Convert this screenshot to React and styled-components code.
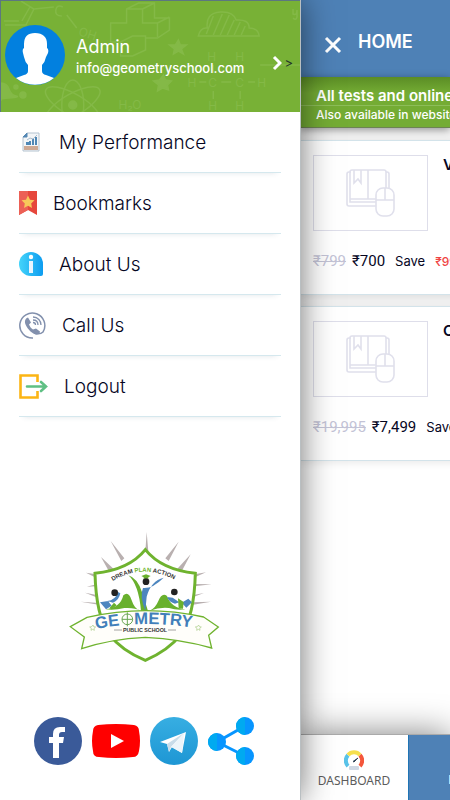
import React from "react";
import styled, { createGlobalStyle, css } from "styled-components";

const GlobalStyle = createGlobalStyle`
  * {
    box-sizing: border-box;
  }
  body {
    margin: 0;
    background: #fff;
    color: #06061f;
    font-family: "Inter", "Open Sans", sans-serif;
  }
  button {
    font-family: inherit;
  }
`;

const Screen = styled.div`
  display: flex;
  min-height: 100vh;
  overflow: hidden;
`;

const Drawer = styled.aside`
  display: flex;
  flex-direction: column;
  flex: 0 0 300px;
  position: relative;
  z-index: 1;
  background: #fff;
  box-shadow: 1px 0 0 #b9bfc2, 0 0 32px rgba(0, 0, 0, 0.58);
`;

const ProfileButton = styled.button`
  display: flex;
  align-items: center;
  position: relative;
  gap: 11px;
  width: 100%;
  height: 112px;
  padding: 0 7px 4px 4px;
  border: solid #5c7780;
  border-width: 1px 0 0 1px;
  background: #78b136;
  color: #fff;
  text-align: left;
  cursor: pointer;
`;

const Doodles = styled.svg`
  position: absolute;
  top: 0;
  left: 0;
  width: 100%;
  height: 100%;
  fill: none;
  stroke: #84b947;
  stroke-width: 1.5;
  text {
    fill: #84b947;
    stroke: none;
    font: 12px "Inter", sans-serif;
  }
`;

const Avatar = styled.svg`
  position: relative;
  flex: none;
  width: 60px;
  height: 60px;
`;

const ProfileText = styled.span`
  display: flex;
  flex-direction: column;
  position: relative;
  flex: 1;
  padding-top: 4px;
`;

const ProfileName = styled.span`
  font-size: 18px;
  line-height: 22px;
`;

const ProfileMail = styled.span`
  font-size: 13px;
  font-weight: 500;
  line-height: 20px;
`;

const ProfileArrow = styled.span`
  display: flex;
  align-items: center;
  position: relative;
  gap: 2px;
  padding-top: 16px;
  color: #23332a;
  font-size: 13px;
`;

const Menu = styled.ul`
  margin: 0;
  padding: 0 19px;
  list-style: none;
`;

const MenuItem = styled.li`
  border-bottom: 1px solid #d5e8ee;
  box-shadow: 0 5px 5px -5px rgba(60, 90, 110, 0.16);
`;

const MenuLink = styled.a`
  display: flex;
  align-items: center;
  gap: 16px;
  height: 60px;
  color: #06061f;
  font-size: 19px;
  font-weight: 300;
  text-decoration: none;
  svg {
    flex: none;
  }
`;

const Brand = styled.div`
  display: flex;
  justify-content: center;
  margin-top: auto;
  padding: 24px 10px 47px 0;
`;

const Social = styled.nav`
  display: flex;
  justify-content: center;
  gap: 10px;
  padding: 0 10px 35px 0;
  a {
    display: block;
    height: 48px;
  }
`;

const Page = styled.main`
  display: flex;
  flex-direction: column;
  flex: 1;
  min-width: 0;
  overflow: hidden;
  background: #fff;
  white-space: nowrap;
`;

const TopBar = styled.header`
  display: flex;
  align-items: center;
  gap: 16px;
  height: 77px;
  padding: 6px 0 0 24px;
  background: #4e81b6;
  color: #fff;
`;

const CloseButton = styled.button`
  display: flex;
  margin-top: 6px;
  padding: 0;
  border: 0;
  background: none;
  cursor: pointer;
`;

const Title = styled.h1`
  margin: 0;
  font-size: 18px;
  font-weight: 600;
  line-height: 24px;
`;

const Notice = styled.section`
  position: relative;
  border-bottom: 1px solid #6d8353;
  background: linear-gradient(#5b8d25, #74ac34 16px, #74ac34);
  box-shadow: 0 2px 8px rgba(0, 0, 0, 0.4);
  color: #fff;
`;

const NoticeTitle = styled.div`
  padding: 10px 0 0 16px;
  border-bottom: 1px solid #8dbd59;
  font-size: 15px;
  font-weight: 600;
  line-height: 18px;
`;

const NoticeText = styled.div`
  padding: 0 0 3px 16px;
  font-size: 12px;
  font-weight: 500;
  line-height: 18px;
`;

const CourseList = styled.div`
  display: grid;
  gap: 11px;
  padding-top: 12px;
  background: #f3f3f3;
`;

const Course = styled.article`
  height: 155px;
  padding: 14px 0 0 13px;
  border: solid #d3e3ea;
  border-width: 1px 0;
  background: #fff;
  box-shadow: 0 2px 8px rgba(0, 0, 0, 0.09);
`;

const CourseTop = styled.div`
  display: flex;
  gap: 15px;
`;

const Cover = styled.div`
  display: flex;
  align-items: center;
  justify-content: center;
  flex: none;
  width: 115px;
  height: 76px;
  border: 1px solid #dedeea;
`;

const CourseName = styled.h2`
  margin: 0;
  font-size: 15px;
  font-weight: 600;
  line-height: 20px;
`;

const Prices = styled.div`
  display: flex;
  align-items: center;
  gap: 6px;
  height: 28px;
  margin-top: 16px;
`;

const Price = styled.span`
  font-family: "Roboto", sans-serif;
  font-size: 15px;
  line-height: 28px;
  ${({ $old }) =>
    $old &&
    css`
      color: #c3c3d6;
      text-decoration: line-through;
    `}
`;

const Save = styled.span`
  margin: 0 4px;
  font-size: 13px;
`;

const Saving = styled.span`
  color: #f04444;
  font-size: 12px;
  font-weight: 500;
`;

const BottomNav = styled.nav`
  display: flex;
  height: 66px;
  margin-top: auto;
  border-top: 1px solid #aaa;
  box-shadow: 0 0 34px rgba(0, 0, 0, 0.5);
`;

const Tab = styled.a`
  display: flex;
  flex: 0 0 108px;
  flex-direction: column;
  align-items: center;
  gap: 3px;
  padding-top: 15px;
  background: #fff;
  color: #5c5c5c;
  font-family: "Noto Sans", sans-serif;
  font-size: 12px;
  line-height: 16px;
  text-decoration: none;
  ${({ $active }) =>
    $active &&
    css`
      flex-basis: 116px;
      padding-top: 37px;
      border-left: 1px solid #1f74b5;
      background: #4e81b6;
      color: #fff;
      font-weight: 700;
    `}
`;

const PerformanceIcon = () => (
  <svg width="24" height="24" viewBox="0 0 24 24" aria-hidden="true">
    <path d="M8 3h12v18H4V7z" fill="#f3f5f7" stroke="#b4c3d0" />
    <path d="M8 3v4H4z" fill="#5588b4" stroke="#5588b4" />
    <path d="M7 15h3v-3H7zm3 0h2v-4h-2zm3 0h2V9h-2zm3 0h2V7h-2z" fill="#4f87b5" />
    <path d="M8 10l3-2 3 1 4-4" stroke="#a8bccd" fill="none" />
    <path d="M5 16h14v4H5z" fill="#cda994" />
  </svg>
);

const BookmarkIcon = () => (
  <svg width="18" height="24" viewBox="0 0 18 24" aria-hidden="true">
    <path d="M0 0h18v24l-9-5-9 5z" fill="#e6473c" />
    <path d="M0 0h9v19l-9 5z" fill="#ec6056" />
    <path d="M9 4.500l2 4.200 4.500.6-3.300 3.200.8 4.500-4-2.200-4 2.200.8-4.500-3.300-3.200 4.500-.6z" fill="#f7c85a" />
  </svg>
);

const InfoIcon = () => (
  <svg width="24" height="24" viewBox="0 0 24 24" aria-hidden="true">
    <defs>
      <linearGradient id="info" x1="0" x2="1">
        <stop offset="0" stopColor="#44d4fa" />
        <stop offset="1" stopColor="#0d9cf0" />
      </linearGradient>
    </defs>
    <path d="M12 0a12 12 0 0 1 12 12v10q0 2-2 2H12a12 12 0 0 1 0-24z" fill="url(#info)" />
    <circle cx="12" cy="5" r="2.200" fill="#fff" />
    <path d="M10 9h4v12h-4z" fill="#e9f5ff" />
  </svg>
);

const CallIcon = () => (
  <svg width="27" height="27" viewBox="0 0 27 27" fill="none" stroke="#8290ad" aria-hidden="true">
    <path d="M14 26A12.500 12.500 0 1 1 24 20q-3 3-9 1" strokeWidth="1.500" />
    <path
      d="M9 5.500c-3 1-4 4-2 8 2 4 6 8 10 9 2 .4 4-1 4-3l-4-3-3 1c-2-1-3-3-4-5l2-2z"
      fill="#8290ad"
      stroke="none"
    />
    <path d="M14 5c5 0 8 4 8 8M14 8c3 0 5 2 5 5M14 10.500c1.500 0 2.500 1 2.500 2.500" strokeWidth="1.300" />
  </svg>
);

const LogoutIcon = () => (
  <svg width="29" height="26" viewBox="0 0 29 26" fill="none" aria-hidden="true">
    <path d="M18.500 9V2.500h-17v22h17V18" stroke="#fcb514" strokeWidth="2.600" />
    <path d="M8 13.500h19M22 9l5 4.500-5 4.500" stroke="#5fc084" strokeWidth="2.600" strokeLinecap="round" />
  </svg>
);

const CourseIcon = () => (
  <svg width="50" height="50" viewBox="0 0 50 50" fill="none" stroke="#e0e0ec" strokeWidth="1.600" aria-hidden="true">
    <path d="M5 4H3Q1 4 1 6v30q0 2 2 2h27" />
    <path d="M30 34H4V4q0-2 2-2h32q2 0 2 2v16M22 2v29M4 31h26M40 4h1q2 0 2 2v14" />
    <path d="M8 2v13l4-4 3 4V2" />
    <rect x="30" y="20" width="18" height="28" rx="7" fill="#fff" />
    <path d="M30 32h18M39 20v12" />
  </svg>
);

const GaugeIcon = () => (
  <svg width="20" height="20" viewBox="0 0 20 20" fill="none" aria-hidden="true">
    <path d="M4 16A8 8 0 0 1 4 5" stroke="#59c3e9" strokeWidth="4" />
    <path d="M4 5a8 8 0 0 1 12 0" stroke="#f6df4e" strokeWidth="4" />
    <path d="M16 5a8 8 0 0 1 0 11" stroke="#f4563b" strokeWidth="4" />
    <path d="M9 11.500l5-3.500-4 4z" fill="#34465a" stroke="#34465a" />
    <rect x="5" y="16" width="10" height="4" rx="1" fill="#cfd8e4" />
  </svg>
);

const HeaderDoodles = () => (
  <Doodles viewBox="0 0 300 111" preserveAspectRatio="none" aria-hidden="true">
    <path d="M20 0l13 8-8 16H4M33 8l20-2M3 20h15M66 14l10 13M29 6l-8 14" />
    <path d="M62 6q-6-3-7 3t6 6" />
    <text x="77" y="34" transform="rotate(18 77 34)">OH</text>
    <path d="M110 22h16V8l12-6h16v15h15v12l-12 8h-12v12l-13 6h-12V41h-10zM126 8h16v14h15v14M142 8l12-6M157 22l12-6M120 41l12-6h13v14" />
    <path d="M198 35q2-9 9-8-2-15 13-16 13-1 16 8 13-1 13 8 9 0 10 8z" />
    <path d="M206 33l7-18M213 34l9-21M220 34l9-20M227 34l7-15M234 34l6-13M241 34l4-9" />
    <path d="M178 39l2 5 6 0-5 4 2 5-5-3-5 3 1-5-5-4h6zM163 74l2 5 6 1-4 4 1 5-6-2-5 3 1-6-5-4 6-1z" fill="#84b947" />
    <text x="207" y="60">H</text>
    <text x="235" y="60">H</text>
    <text x="187" y="86">H</text>
    <text x="208" y="86">C</text>
    <text x="235" y="86">C</text>
    <text x="257" y="86">H</text>
    <text x="208" y="109">H</text>
    <text x="235" y="109">H</text>
    <path d="M199 81h7M221 81h10M248 81h7M213 64v8M240 64v8M213 90v8M240 90v8M260 64h40" />
    <text x="118" y="108">H₂O</text>
    <ellipse cx="72" cy="104" rx="31" ry="11" transform="rotate(-30 72 104)" />
    <ellipse cx="72" cy="104" rx="31" ry="11" transform="rotate(30 72 104)" />
    <ellipse cx="72" cy="104" rx="11" ry="25" />
    <circle cx="72" cy="104" r="4" fill="#84b947" />
    <path d="M0 82q6 0 8 6t7 7-7 2-8 2z" fill="#84b947" />
    <circle cx="22" cy="94" r="3" fill="#84b947" />
    <circle cx="15" cy="86" r="2" fill="#84b947" />
    <path d="M293 8v5q4 2 4-4v7q-1 4-4 1" />
  </Doodles>
);

const SchoolLogo = () => (
  <svg width="170" height="145" viewBox="0 0 510 435" role="img" aria-label="Geometry Public School">
    <g fill="#b9b0b0">
      <path d="M256 80l4-59 5 59zM184 108l-32-60 41 52zM326 108l30-58-40 50zM150 145l-27-49 42 40zM362 145l30-57-44 48zM102 155l-24-12 26 4zM408 155l30-13-30 5zM108 184l-28 1 29-7zM403 184l52-6-52-1zM120 240l-58-10 56 4zM395 240l58-10-56 2z" />
      <path d="M113 218l-38-15 36 7zM400 216l32-12-32 6z" />
    </g>
    <path
      d="M256 74q48 60 150 71-3 125-41 181-40 51-109 80-72-29-110-80-38-56-41-181 103-11 151-71z"
      fill="#fff"
      stroke="#6fb32f"
      strokeWidth="9"
    />
    <path d="M205 151q28 8 42 53l17 54h-21q-7-80-38-107z" fill="#69b02d" />
    <path d="M311 158q-38 9-51 57l-4 42q-18-44-7-68 28 3 62-31z" fill="#4d86bf" />
    <path d="M136 253q45-4 54-42 16-14 25 15 9 28 26 31-16-10-48-8-30 8-57 4zM376 253q-43-4-55-40-15-12-26 15-9 22-26 29 30-11 58-8 24 8 49 4z" fill="#69b02d" />
    <path d="M181 205q-4 21-22 28l-17-5q24-2 32-27zM321 216q8 17 24 20l13-4-20-14zM120 232l24-4 11 14-17 11zM365 233l20-12 11 11-17 16z" fill="#4d86bf" />
    <path d="M148 250l14-17 8 8-14 12zM356 250l-2-30 17 11-2 20z" fill="#69b02d" />
    <path d="M244 153l14-5 14 5-7 4v4h-14v-4z" fill="#69b02d" />
    <circle cx="258" cy="170" r="10" fill="#222" />
    <circle cx="164" cy="203" r="10" fill="#222" />
    <circle cx="343" cy="201" r="10" fill="#222" />
    <path
      d="M31 305l50-28q174-40 350-1l44 30-29 25 9 38q-92-27-199-32-105 5-191 34l8-35z"
      fill="#fffefa"
      stroke="#6fb32f"
      strokeWidth="4"
    />
    <path id="logo-arc" d="M158 168q97-58 200 4" fill="none" />
    <path id="logo-name" d="M108 312q147-30 314 0" fill="none" />
    <text fill="#333" fontFamily="Liberation Sans, sans-serif" fontSize="18" fontWeight="700">
      <textPath href="#logo-arc">
        DREAM <tspan fill="#6fb32f">PLAN</tspan> ACTION
      </textPath>
    </text>
    <text fill="#417fb9" fontFamily="Liberation Sans, sans-serif" fontSize="50" fontWeight="700">
      <textPath href="#logo-name">GE</textPath>
    </text>
    <text fill="#417fb9" fontFamily="Liberation Sans, sans-serif" fontSize="50" fontWeight="700">
      <textPath href="#logo-name" startOffset="116">METRY</textPath>
    </text>
    <g fill="none" stroke="#69a653" strokeWidth="3">
      <circle cx="202" cy="283" r="16" />
      <path d="M202 262v42M186 283h32" />
    </g>
    <g fill="none" stroke="#a6ca82" strokeWidth="2">
      <path d="M99 300l2 5 6 1-5 4 1 6-5-3-5 3 1-6-5-4 6-1zM416 300l2 5 6 1-5 4 1 6-5-3-5 3 1-6-5-4 6-1z" />
    </g>
    <text x="255" y="320" textAnchor="middle" fill="#333" fontFamily="Liberation Sans, sans-serif" fontSize="16" fontWeight="700">
      PUBLIC SCHOOL
    </text>
    <path d="M162 315h24M324 315h24" stroke="#777" strokeWidth="2" />
  </svg>
);

const FacebookIcon = () => (
  <svg width="48" height="48" viewBox="0 0 48 48" aria-hidden="true">
    <circle cx="24" cy="24" r="24" fill="#3a5a99" />
    <path d="M19 41V26h-4v-6h4v-3q0-7 7-7h5v5h-3q-3 0-3 3v2h5l-1 6h-4v15z" fill="#fff" />
  </svg>
);

const YoutubeIcon = () => (
  <svg width="48" height="48" viewBox="0 0 48 48" aria-hidden="true">
    <path d="M6 8q18-2 36 0 5 1 5 6 2 10 0 20-1 6-6 6-17 2-34 0-6 0-6-6-2-10 0-20 0-5 5-6z" fill="#f00" />
    <path d="M19 17l13 7-13 7z" fill="#fff" />
  </svg>
);

const TelegramIcon = () => (
  <svg width="48" height="48" viewBox="0 0 48 48" aria-hidden="true">
    <defs>
      <linearGradient id="telegram" x1="0" x2="0" y1="0" y2="1">
        <stop offset="0" stopColor="#37aee2" />
        <stop offset="1" stopColor="#1e96d4" />
      </linearGradient>
    </defs>
    <circle cx="24" cy="24" r="24" fill="url(#telegram)" />
    <path d="M10 25l26-10-4 21-10-6-3 5-2-8z" fill="#fff" />
    <path d="M17 27l17-11-13 14-2 5z" fill="#c9dce9" />
    <path d="M21 30l13-14-2 20z" fill="#edf5fa" />
  </svg>
);

const ShareIcon = () => (
  <svg width="48" height="48" viewBox="0 0 48 48" aria-hidden="true">
    <path d="M37 9L9 25l28 14" fill="none" stroke="#0795ff" strokeWidth="3" />
    <g fill="#0795ff">
      <circle cx="37" cy="9" r="9" />
      <circle cx="9" cy="25" r="9" />
      <circle cx="37" cy="39" r="9" />
    </g>
    <path d="M37 0a9 9 0 0 0 0 18zM9 16a9 9 0 0 0 0 18zM37 30a9 9 0 0 0 0 18z" fill="#00aaf0" />
  </svg>
);

const menuItems = [
  { label: "My Performance", Icon: PerformanceIcon },
  { label: "Bookmarks", Icon: BookmarkIcon },
  { label: "About Us", Icon: InfoIcon },
  { label: "Call Us", Icon: CallIcon },
  { label: "Logout", Icon: LogoutIcon },
];

const socialLinks = [
  { label: "Facebook", Icon: FacebookIcon },
  { label: "YouTube", Icon: YoutubeIcon },
  { label: "Telegram", Icon: TelegramIcon },
  { label: "Share", Icon: ShareIcon },
];

const courses = [
  { name: "V", oldPrice: "₹799", price: "₹700", saving: "₹99" },
  { name: "C", oldPrice: "₹19,995", price: "₹7,499", saving: "₹12,496" },
];

const Profile = () => (
  <ProfileButton type="button">
    <HeaderDoodles />
    <Avatar viewBox="0 0 60 60" aria-hidden="true">
      <circle cx="30" cy="30" r="30" fill="#0280df" />
      <path
        d="M30 8c8 0 12 4 12 11v4q2 1 1 5l-2 4q-1 5-4 8v6q0 3 4 4l8 3A30 30 0 0 1 11 53l8-3q4-1 4-4v-6q-3-3-4-8l-1-4q-1-4 1-5v-4q0-11 11-11z"
        fill="#fff"
      />
    </Avatar>
    <ProfileText>
      <ProfileName>Admin</ProfileName>
      <ProfileMail>info@geometryschool.com</ProfileMail>
    </ProfileText>
    <ProfileArrow>
      <svg width="10" height="16" viewBox="0 0 10 16" fill="none" stroke="#fff" strokeWidth="3" aria-hidden="true">
        <path d="M2 2l6 6-6 6" />
      </svg>
      &gt;
    </ProfileArrow>
  </ProfileButton>
);

const CourseCard = ({ name, oldPrice, price, saving }) => (
  <Course>
    <CourseTop>
      <Cover>
        <CourseIcon />
      </Cover>
      <CourseName>{name}</CourseName>
    </CourseTop>
    <Prices>
      <Price as="del" $old>
        {oldPrice}
      </Price>
      <Price>{price}</Price>
      <Save>Save</Save>
      <Saving>{saving}</Saving>
    </Prices>
  </Course>
);

const App = () => (
  <>
    <GlobalStyle />
    <Screen>
      <Drawer>
        <Profile />
        <Menu>
          {menuItems.map(({ label, Icon }) => (
            <MenuItem key={label}>
              <MenuLink href="#">
                <Icon />
                {label}
              </MenuLink>
            </MenuItem>
          ))}
        </Menu>
        <Brand>
          <SchoolLogo />
        </Brand>
        <Social>
          {socialLinks.map(({ label, Icon }) => (
            <a key={label} href="#" aria-label={label}>
              <Icon />
            </a>
          ))}
        </Social>
      </Drawer>
      <Page>
        <TopBar>
          <CloseButton type="button" aria-label="Close menu">
            <svg width="18" height="18" viewBox="0 0 18 18" stroke="#fff" strokeWidth="3" aria-hidden="true">
              <path d="M2 2l14 14M16 2L2 16" />
            </svg>
          </CloseButton>
          <Title>HOME</Title>
        </TopBar>
        <Notice>
          <NoticeTitle>All tests and online courses</NoticeTitle>
          <NoticeText>Also available in website</NoticeText>
        </Notice>
        <CourseList>
          {courses.map(course => (
            <CourseCard key={course.name} {...course} />
          ))}
        </CourseList>
        <BottomNav>
          <Tab href="#">
            <GaugeIcon />
            DASHBOARD
          </Tab>
          <Tab href="#" $active>
            HOME
          </Tab>
        </BottomNav>
      </Page>
    </Screen>
  </>
);

export default App;
